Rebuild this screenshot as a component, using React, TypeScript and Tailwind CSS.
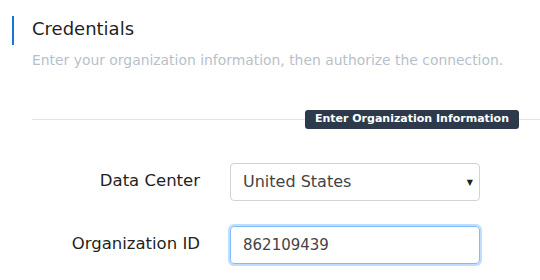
export default function App() {
  return (
    <div className="w-[540px] h-[280px] bg-white overflow-hidden" style={{ fontFamily: '"DejaVu Sans", sans-serif' }}>
      <div className="pt-4">
        <div className="ml-3 border-l-2 border-[#1976d2] pl-[18px] h-[29px] flex items-center">
          <h2 className="mb-[3px] text-[18px] leading-none text-[#1f1f1f]">Credentials</h2>
        </div>
        <p className="ml-8 mt-[5px] text-[13.9px] text-[#b7bfcc]">
          Enter your organization information, then authorize the connection.
        </p>
      </div>

      <div className="relative ml-8 mt-[48px] border-t border-[#e3e3e3]">
        <span className="absolute right-[21px] -top-[10px] rounded-[3px] bg-[#2c3a4b] px-[10px] h-[19px] flex items-center text-[11px] font-semibold text-white">
          Enter Organization Information
        </span>
      </div>

      <div className="mt-[43px] grid grid-cols-[200px_250px] gap-x-[30px] gap-y-[25px] items-center">
        <label className="text-right text-[16.5px] text-[#1f1f1f]">Data Center</label>
        <div className="relative h-[38px] rounded-[4px] border border-[#cfd4da] flex items-center px-3 text-[16px] text-[#444]">
          United States
          <span className="absolute right-[6px] top-[13px] text-[8px] text-[#222]">▼</span>
        </div>
        <label className="text-right text-[16.5px] text-[#1f1f1f]">Organization ID</label>
        <div className="h-[38px] rounded-[4px] border border-[#80bdff] shadow-[0_0_0_2px_rgba(128,189,255,0.5)] flex items-center px-3 text-[15px] text-[#444]">
          862109439
        </div>
      </div>
    </div>
  );
}
